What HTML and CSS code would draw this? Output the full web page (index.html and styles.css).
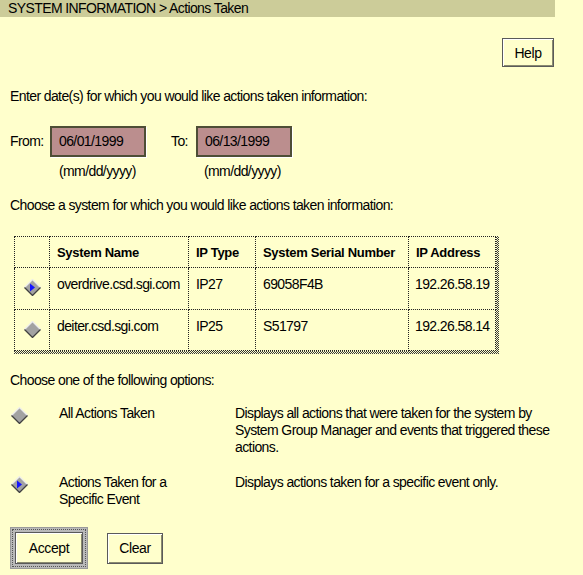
FILE: index.html
```html
<!DOCTYPE html>
<html>
<head>
<meta charset="utf-8">
<title>Actions Taken</title>
<link rel="stylesheet" href="styles.css">
</head>
<body>
<div class="page">
  <div class="titlebar">SYSTEM INFORMATION &gt; Actions Taken</div>

  <div class="help-row"><button class="btn help">Help</button></div>

  <p class="text enter">Enter date(s) for which you would like actions taken information:</p>

  <div class="dates">
    <div class="date-group from">
      <div class="date-line"><span class="lbl">From:</span><span class="field">06/01/1999</span></div>
      <div class="hint">(mm/dd/yyyy)</div>
    </div>
    <div class="date-group to">
      <div class="date-line"><span class="lbl">To:</span><span class="field">06/13/1999</span></div>
      <div class="hint">(mm/dd/yyyy)</div>
    </div>
  </div>

  <p class="text choose-sys">Choose a system for which you would like actions taken information:</p>

  <div class="tbl-wrap">
    <table class="sys">
      <colgroup>
        <col class="c0"><col class="c1"><col class="c2"><col class="c3"><col class="c4">
      </colgroup>
      <tr class="head">
        <th></th><th>System Name</th><th>IP Type</th><th>System Serial Number</th><th>IP Address</th>
      </tr>
      <tr class="r1">
        <td class="rad"><svg class="dia" width="17" height="17" viewBox="0 0 17 17"><polygon points="8.5,0.5 16.5,8.5 8.5,16.5 0.5,8.5" fill="#a2a2a2"/><polyline points="0.5,8.5 8.5,0.5 16.5,8.5" fill="none" stroke="#ececec" stroke-width="1.3"/><polyline points="0.5,8.5 8.5,16.5 16.5,8.5" fill="none" stroke="#404040" stroke-width="1.3"/><polygon points="6,4.5 11,8.5 6,12.5" fill="#1414ff"/></svg></td>
        <td>overdrive.csd.sgi.com</td><td>IP27</td><td>69058F4B</td><td class="ip">192.26.58.19</td>
      </tr>
      <tr class="r2">
        <td class="rad"><svg class="dia" width="17" height="17" viewBox="0 0 17 17"><polygon points="8.5,0.5 16.5,8.5 8.5,16.5 0.5,8.5" fill="#a2a2a2"/><polyline points="0.5,8.5 8.5,0.5 16.5,8.5" fill="none" stroke="#ececec" stroke-width="1.3"/><polyline points="0.5,8.5 8.5,16.5 16.5,8.5" fill="none" stroke="#404040" stroke-width="1.3"/></svg></td>
        <td>deiter.csd.sgi.com</td><td>IP25</td><td>S51797</td><td class="ip">192.26.58.14</td>
      </tr>
    </table>
  </div>

  <p class="text choose-opt">Choose one of the following options:</p>

  <div class="options">
    <div class="opt o1">
      <svg class="dia" width="17" height="17" viewBox="0 0 17 17"><polygon points="8.5,0.5 16.5,8.5 8.5,16.5 0.5,8.5" fill="#a2a2a2"/><polyline points="0.5,8.5 8.5,0.5 16.5,8.5" fill="none" stroke="#ececec" stroke-width="1.3"/><polyline points="0.5,8.5 8.5,16.5 16.5,8.5" fill="none" stroke="#404040" stroke-width="1.3"/></svg>
      <div class="opt-label">All Actions Taken</div>
      <div class="opt-desc">Displays all actions that were taken for the system by System Group Manager and events that triggered these actions.</div>
    </div>
    <div class="opt o2">
      <svg class="dia" width="17" height="17" viewBox="0 0 17 17"><polygon points="8.5,0.5 16.5,8.5 8.5,16.5 0.5,8.5" fill="#a2a2a2"/><polyline points="0.5,8.5 8.5,0.5 16.5,8.5" fill="none" stroke="#ececec" stroke-width="1.3"/><polyline points="0.5,8.5 8.5,16.5 16.5,8.5" fill="none" stroke="#404040" stroke-width="1.3"/><polygon points="6,4.5 11,8.5 6,12.5" fill="#1414ff"/></svg>
      <div class="opt-label">Actions Taken for a Specific Event</div>
      <div class="opt-desc">Displays actions taken for a specific event only.</div>
    </div>
  </div>

  <div class="actions">
    <div class="default-frame"><button class="btn accept">Accept</button></div>
    <button class="btn clear">Clear</button>
  </div>
</div>
</body>
</html>
```

FILE: styles.css
```css
html, body {
  margin: 0;
  padding: 0;
  background: #ffffcc;
}
body {
  font-family: "Liberation Sans", Arial, sans-serif;
  font-size: 14px;
  letter-spacing: -0.6px;
  color: #000;
  line-height: 17px;
}
.page {
  width: 583px;
  height: 575px;
  overflow: hidden;
}
.titlebar {
  width: 547px;
  height: 17px;
  padding-left: 8px;
  background: #cccc99;
  line-height: 16px;
}
.help-row {
  width: 554px;
  margin-top: 21px;
  display: flex;
  justify-content: flex-end;
}
.btn {
  font-family: inherit;
  font-size: 14px;
  letter-spacing: -0.4px;
  color: #000;
  background: #ffffcc;
  box-sizing: border-box;
  border: 1px solid #5a5a5a;
  box-shadow: inset 1px 1px 0 #ffffff, inset -1px -1px 0 #8a8a70;
  padding: 0;
  margin: 0;
}
.help {
  width: 52px;
  height: 29px;
}
.text {
  margin: 0;
  padding-left: 10px;
}
.enter {
  margin-top: 21px;
}
.dates {
  display: flex;
  margin-top: 21px;
  padding-left: 10px;
}
.date-line {
  display: flex;
  align-items: center;
}
.lbl {
  display: inline-block;
}
.from .lbl { width: 40px; }
.to { margin-left: 25px; }
.to .lbl { width: 25px; }
.field {
  display: inline-block;
  box-sizing: border-box;
  width: 96px;
  height: 31px;
  background: #bb8e8e;
  border: 2px solid #4e4e36;
  box-shadow: 1px 1px 0 #ffffff;
  padding-left: 7px;
  line-height: 27px;
}
.hint {
  margin-top: 6px;
}
.from .hint { padding-left: 49px; }
.to .hint { padding-left: 33px; }
.choose-sys {
  margin-top: 17px;
}
.tbl-wrap {
  display: block;
  width: fit-content;
  margin-top: 22px;
  margin-left: 14px;
  padding: 0 3px 3px 0;
  background: repeating-conic-gradient(#3a3a3a 0 25%, #ffffcc 0 50%) 0 0 / 2px 2px;
}
.sys {
  width: 481px;
  border-collapse: collapse;
  table-layout: fixed;
  background: #ffffcc;
}
.c0 { width: 35px; }
.c1 { width: 139px; }
.c2 { width: 67px; }
.c3 { width: 153px; }
.c4 { width: 87px; }
.sys th, .sys td {
  border: 1px dotted #222;
  padding: 0 0 0 7px;
  text-align: left;
  white-space: nowrap;
  overflow: hidden;
}
.sys th {
  height: 30px;
  font-weight: bold;
  font-size: 13px;
  letter-spacing: -0.3px;
  vertical-align: middle;
}
.sys td {
  vertical-align: top;
  padding-top: 8px;
}
.r1 { height: 42px; }
.r2 { height: 41px; }
.sys td.rad {
  padding: 11px 0 0 9px;
}
.sys td.ip { padding-left: 6px; }
.dia { display: block; }
.choose-opt {
  margin-top: 18px;
}
.options {
  margin-top: 16px;
  padding-left: 11px;
}
.opt {
  display: grid;
  grid-template-columns: 48px 176px 320px;
}
.opt .dia { margin-top: 2px; }
.o2 { margin-top: 18px; }
.opt-label { width: 130px; }
.actions {
  display: flex;
  align-items: center;
  margin-top: 19px;
  padding-left: 10px;
}
.default-frame {
  box-sizing: border-box;
  width: 78px;
  height: 42px;
  padding: 4px;
  background: #b9b9b9;
  border: 1px solid #9a9a9a;
  outline: 1px dotted #555;
  outline-offset: -3px;
}
.accept {
  width: 68px;
  height: 32px;
  display: block;
}
.clear {
  width: 56px;
  height: 31px;
  margin-left: 19px;
}
```
